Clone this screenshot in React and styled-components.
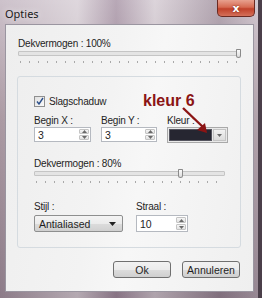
import React from "react";
import styled, { createGlobalStyle } from "styled-components";

const Global = createGlobalStyle`
  html, body { margin: 0; padding: 0; }
  body { font-family: "Liberation Sans", Arial, sans-serif; font-size: 10px; color: #1e1e1e; }
`;

const Frame = styled.div`
  position: relative;
  width: 262px;
  height: 298px;
  box-sizing: border-box;
  display: flex;
  flex-direction: column;
  background:
    linear-gradient(90deg, rgba(255,255,255,0) 0%, rgba(255,255,255,0.35) 30%, rgba(120,90,120,0.25) 45%, rgba(255,255,255,0.3) 60%, rgba(80,60,80,0.2) 85%, rgba(255,255,255,0.1) 100%),
    linear-gradient(180deg, #cdc2cb 0%, #ab9aa3 40%, #8c7b88 100%);
  border-right: 4px solid #4b3f4a;
  overflow: hidden;
`;

const TitleBar = styled.div`
  height: 24px;
  display: flex;
  justify-content: space-between;
  align-items: flex-start;
  padding-left: 5px;
  padding-right: 3px;
`;

const Title = styled.span`
  margin-top: 6px;
  font-family: "Noto Sans", sans-serif;
  font-size: 11px;
  color: #1a1a1a;
  text-shadow: 0 0 6px rgba(255,255,255,0.9);
`;

const Close = styled.div`
  width: 38px;
  height: 17px;
  box-sizing: border-box;
  border: 1px solid #6b2a22;
  border-top: none;
  border-radius: 0 0 5px 5px;
  background: linear-gradient(180deg, #e8a08e 0%, #d66a52 45%, #c0412a 55%, #d4705a 100%);
  display: flex;
  align-items: center;
  justify-content: center;
  color: #fff;
  font-family: "DejaVu Sans", sans-serif;
  font-weight: bold;
  font-size: 11px;
  text-shadow: 0 0 2px #6b1a10;
`;

const Client = styled.div`
  flex: 1;
  margin: 0 4px 6px 5px;
  box-sizing: border-box;
  border: 1px solid #9a95a0;
  background: linear-gradient(100deg, #eeeeee 0%, #f3f3f3 40%, #f7f7f7 55%, #efefef 100%);
  padding: 12px 13px 0 12px;
  display: flex;
  flex-direction: column;
`;

const Label = styled.div`
  font-size: 10px;
  line-height: 13px;
  letter-spacing: -0.2px;
  color: #1e1e1e;
  margin-top: ${p => p.$mt || 0}px;
`;

const SliderWrap = styled.div`
  position: relative;
  width: ${p => p.$w}px;
  height: 16px;
  margin-top: ${p => p.$mt}px;
`;

const Track = styled.div`
  position: absolute;
  left: 0;
  right: 0;
  top: 1px;
  height: 3px;
  border: 1px solid #c5c5c5;
  background: #e4e4e4;
  border-radius: 1px;
`;

const Thumb = styled.div`
  position: absolute;
  top: -1px;
  left: ${p => p.$at}px;
  width: 5px;
  height: 9px;
  box-sizing: border-box;
  border: 1px solid #8a8a8a;
  border-radius: 1px 1px 3px 3px;
  background: linear-gradient(180deg, #fbfbfb, #dcdcdc);
`;

const Ticks = styled.div`
  position: absolute;
  left: 2px;
  right: 2px;
  top: 11px;
  height: 2px;
  background: repeating-linear-gradient(90deg, #a9a9a9 0 1px, transparent 1px 9px);
`;

const Slider = ({ width, at, mt = 0 }) => (
  <SliderWrap $w={width} $mt={mt}>
    <Track />
    <Ticks />
    <Thumb $at={at} />
  </SliderWrap>
);

const Group = styled.div`
  margin-top: 10px;
  margin-left: -1px;
  width: 224px;
  height: 172px;
  box-sizing: border-box;
  border: 1px solid #d5dbe0;
  border-radius: 3px;
  padding: 17px 0 0 16px;
  display: flex;
  flex-direction: column;
`;

const CheckRow = styled.div`
  display: flex;
  align-items: center;
  gap: 4px;
  height: 14px;
`;

const Box = styled.div`
  width: 9px;
  height: 9px;
  border: 1px solid #8f8f8f;
  background: linear-gradient(135deg, #e0e0e0, #fafafa);
  display: flex;
  align-items: center;
  justify-content: center;
`;

const FieldRow = styled.div`
  display: flex;
  gap: ${p => p.$gap}px;
  margin-top: ${p => p.$mt}px;
`;

const Field = styled.div`
  display: flex;
  flex-direction: column;
  gap: ${p => p.$gap || 0}px;
`;

const Spin = styled.div`
  width: ${p => p.$w}px;
  height: ${p => p.$h}px;
  box-sizing: border-box;
  border: 1px solid #b5b9c0;
  background: #fff;
  display: flex;
  align-items: stretch;
`;

const SpinText = styled.div`
  flex: 1;
  padding-left: 3px;
  display: flex;
  align-items: center;
  font-size: 10.5px;
`;

const SpinBtns = styled.div`
  width: 10px;
  display: flex;
  flex-direction: column;
  gap: 1px;
  padding: 1px;
`;

const SpinBtn = styled.div`
  flex: 1;
  border: 1px solid #c4c4c4;
  border-radius: 1px;
  background: linear-gradient(180deg, #f6f6f6, #e2e2e2);
  display: flex;
  align-items: center;
  justify-content: center;
`;

const Arrow = ({ up }) => (
  <svg width="5" height="3" viewBox="0 0 5 3">
    <path d={up ? "M0 3 L2.5 0 L5 3Z" : "M0 0 L2.5 3 L5 0Z"} fill="#6a6a6a" />
  </svg>
);

const SpinBox = ({ value, w, h = 15 }) => (
  <Spin $w={w} $h={h}>
    <SpinText>{value}</SpinText>
    <SpinBtns>
      <SpinBtn><Arrow up /></SpinBtn>
      <SpinBtn><Arrow /></SpinBtn>
    </SpinBtns>
  </Spin>
);

const ColorPick = styled.div`
  width: 61px;
  height: 16px;
  box-sizing: border-box;
  border: 1px solid #a9a9a9;
  background: #e9e9e9;
  display: flex;
  padding: 1px;
  gap: 1px;
`;

const Swatch = styled.div`
  flex: 1;
  background: #262631;
  border: 1px solid #55555f;
`;

const DropBtn = styled.div`
  width: 11px;
  background: linear-gradient(180deg, #f2f2f2, #dcdcdc);
  border: 1px solid #c4c4c4;
  display: flex;
  align-items: center;
  justify-content: center;
`;

const Select = styled.div`
  width: 89px;
  height: 17px;
  box-sizing: border-box;
  border: 1px solid #8e8f8f;
  border-radius: 2px;
  background: linear-gradient(180deg, #f4f4f4 0%, #ebebeb 50%, #dcdcdc 51%, #d0d0d0 100%);
  display: flex;
  align-items: center;
  justify-content: space-between;
  padding: 0 6px 0 4px;
  font-size: 10.5px;
`;

const Footer = styled.div`
  display: flex;
  justify-content: flex-end;
  gap: 11px;
  margin-top: 13px;
`;

const Button = styled.div`
  width: 58px;
  height: 17px;
  box-sizing: border-box;
  border: 1px solid #707070;
  border-radius: 3px;
  background: linear-gradient(180deg, #f2f2f2 0%, #ebebeb 50%, #dddddd 51%, #cfcfcf 100%);
  display: flex;
  align-items: center;
  justify-content: center;
  font-size: 10.5px;
  color: #1e1e1e;
`;

const Note = styled.div`
  position: absolute;
  left: 143px;
  top: 92px;
  font-family: "Liberation Sans", Arial, sans-serif;
  font-weight: bold;
  font-size: 16px;
  color: #8b1414;
`;

const NoteArrow = styled.svg`
  position: absolute;
  left: 180px;
  top: 106px;
`;

export default function App() {
  return (
    <>
      <Global />
      <Frame>
        <TitleBar>
          <Title>Opties</Title>
          <Close>x</Close>
        </TitleBar>
        <Client>
          <Label>Dekvermogen : 100%</Label>
          <Slider width={223} at={218} />
          <Group>
            <CheckRow>
              <Box>
                <svg width="8" height="8" viewBox="0 0 8 8">
                  <path d="M1 4.5 L3 7 L7 1" stroke="#2b4f8a" strokeWidth="1.4" fill="none" />
                </svg>
              </Box>
              <Label>Slagschaduw</Label>
            </CheckRow>
            <FieldRow $gap={10} $mt={6}>
              <Field>
                <Label>Begin X :</Label>
                <SpinBox value="3" w={57} />
              </Field>
              <Field>
                <Label>Begin Y :</Label>
                <SpinBox value="3" w={56} />
              </Field>
              <Field>
                <Label>Kleur :</Label>
                <ColorPick>
                  <Swatch />
                  <DropBtn><Arrow /></DropBtn>
                </ColorPick>
              </Field>
            </FieldRow>
            <Label $mt={14}>Dekvermogen : 80%</Label>
            <Slider width={191} at={144} />
            <FieldRow $gap={13} $mt={14}>
              <Field $gap={2}>
                <Label>Stijl :</Label>
                <Select>
                  <span>Antialiased</span>
                  <svg width="7" height="4" viewBox="0 0 7 4"><path d="M0 0 L3.5 4 L7 0Z" fill="#222" /></svg>
                </Select>
              </Field>
              <Field $gap={2}>
                <Label>Straal :</Label>
                <SpinBox value="10" w={52} h={17} />
              </Field>
            </FieldRow>
          </Group>
          <Footer>
            <Button>Ok</Button>
            <Button>Annuleren</Button>
          </Footer>
        </Client>
        <Note>kleur 6</Note>
        <NoteArrow width="32" height="28" viewBox="0 0 32 28">
          <path d="M3 2 L24 22" stroke="#8b1414" strokeWidth="2.4" fill="none" />
          <path d="M17 24 L27 27 L25 17 Z" fill="#8b1414" />
        </NoteArrow>
      </Frame>
    </>
  );
}
